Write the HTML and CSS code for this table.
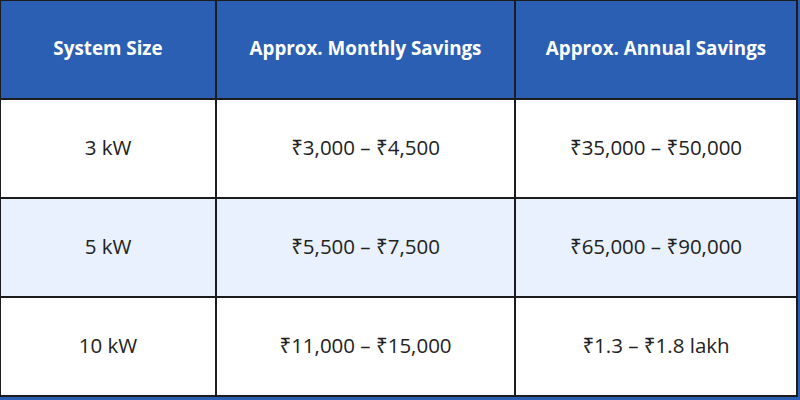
FILE: index.html
```html
<!DOCTYPE html>
<html>
<head>
<meta charset="utf-8">
<link rel="stylesheet" href="styles.css">
</head>
<body>
<table class="savings">
  <thead>
    <tr>
      <th class="c1">System Size</th>
      <th class="c2">Approx. Monthly Savings</th>
      <th class="c3">Approx. Annual Savings</th>
    </tr>
  </thead>
  <tbody>
    <tr>
      <td>3 kW</td>
      <td>₹3,000 – ₹4,500</td>
      <td>₹35,000 – ₹50,000</td>
    </tr>
    <tr class="alt">
      <td>5 kW</td>
      <td>₹5,500 – ₹7,500</td>
      <td>₹65,000 – ₹90,000</td>
    </tr>
    <tr>
      <td>10 kW</td>
      <td>₹11,000 – ₹15,000</td>
      <td>₹1.3 – ₹1.8 lakh</td>
    </tr>
  </tbody>
</table>
</body>
</html>
```
FILE: styles.css
```css
html, body {
  margin: 0;
  padding: 0;
  background: #2b5fb3;
  width: 800px;
  height: 400px;
  overflow: hidden;
}
.savings {
  border-collapse: collapse;
  width: 799px;
  margin: -1px 0 0 -1px;
  font-family: "Open Sans", "Noto Sans", sans-serif;
  color: #222222;
  table-layout: fixed;
}
.savings th,
.savings td {
  border: 2px solid #1c1c1e;
  text-align: center;
  vertical-align: middle;
  padding: 0 0 4px 0;
}
.savings th {
  background: #2b5fb3;
  color: #ffffff;
  font-weight: 700;
  font-size: 18.8px;
  height: 93px;
}
.savings td {
  background: #ffffff;
  font-size: 20.5px;
  height: 93px;
}
.savings .alt td {
  background: #e8f1fd;
}
.c1 { width: 214px; }
.c2 { width: 297px; }
.c3 { width: auto; }
```
